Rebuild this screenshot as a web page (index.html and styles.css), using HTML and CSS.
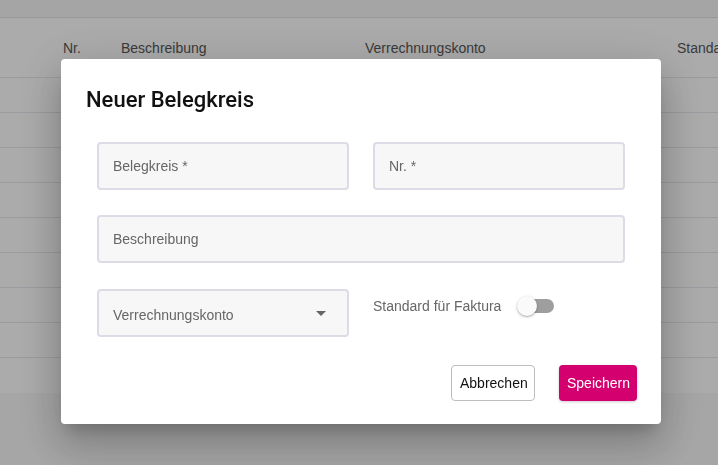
FILE: index.html
```html
<!DOCTYPE html>
<html lang="de">
<head>
<meta charset="utf-8">
<title>Neuer Belegkreis</title>
<link rel="stylesheet" href="styles.css">
</head>
<body>
<div class="page">
  <div class="topbar"></div>
  <div class="table">
    <div class="thead">
      <span>Nr.</span>
      <span>Beschreibung</span>
      <span>Verrechnungskonto</span>
      <span class="clip">Standard</span>
    </div>
    <div class="row"></div>
    <div class="row"></div>
    <div class="row"></div>
    <div class="row"></div>
    <div class="row"></div>
    <div class="row"></div>
    <div class="row"></div>
    <div class="row"></div>
    <div class="row last"></div>
  </div>
</div>

<div class="overlay">
  <div class="modal">
    <h2 class="title">Neuer Belegkreis</h2>
    <div class="form">
      <div class="field"><span class="ph">Belegkreis *</span></div>
      <div class="field"><span class="ph">Nr. *</span></div>
      <div class="field wide"><span class="ph">Beschreibung</span></div>
      <div class="field select">
        <span class="ph">Verrechnungskonto</span>
        <span class="caret"></span>
      </div>
      <div class="toggle-row">
        <span class="toggle-label">Standard für Faktura</span>
        <span class="toggle"><span class="track"></span><span class="knob"></span></span>
      </div>
    </div>
    <div class="actions">
      <button class="btn btn-outline">Abbrechen</button>
      <button class="btn btn-primary">Speichern</button>
    </div>
  </div>
</div>
</body>
</html>
```

FILE: styles.css
```css
* { box-sizing: border-box; }

html, body {
  margin: 0;
  padding: 0;
  height: 100%;
  overflow: hidden;
}

body {
  font-family: "Liberation Sans", Arial, sans-serif;
  background: #f8f8f8;
  color: #222;
}

.page {
  width: 718px;
  height: 465px;
}

.topbar {
  height: 18px;
  background: #f6f6f6;
  border-bottom: 1px solid #e2e2e6;
}

.table {
  background: #fff;
}

.thead {
  height: 60px;
  display: grid;
  grid-template-columns: 58px 244px 312px 41px;
  align-items: center;
  padding-left: 63px;
  padding-top: 1px;
  font-size: 14px;
  color: #575757;
  white-space: nowrap;
  border-bottom: 1px solid #e6e6ee;
}

.clip {
  overflow: hidden;
}

.row {
  height: 35px;
  border-bottom: 1px solid #e6e6ee;
}

.row.last {
  border-bottom: none;
}

.overlay {
  position: fixed;
  inset: 0;
  background: rgba(0, 0, 0, 0.33);
  display: flex;
  justify-content: flex-start;
  align-items: flex-start;
  padding: 59px 0 0 61px;
}

.modal {
  width: 600px;
  height: 365px;
  background: #fff;
  border-radius: 4px;
  padding: 27px 36px 0 36px;
  box-shadow: 0 11px 15px -7px rgba(0,0,0,.2), 0 24px 38px 3px rgba(0,0,0,.14), 0 9px 46px 8px rgba(0,0,0,.12);
}

.title {
  margin: 0 0 0 -11px;
  font-size: 22px;
  font-weight: 500;
  font-family: Roboto, "Liberation Sans", sans-serif;
  color: #111;
  line-height: 28px;
  height: 28px;
}

.form {
  margin-top: 28px;
  display: grid;
  grid-template-columns: 252px 252px;
  column-gap: 24px;
  row-gap: 25px;
}

.field {
  height: 48px;
  border: 2px solid #dcdce6;
  border-radius: 4px;
  background: #f7f7f8;
  display: flex;
  align-items: center;
  padding: 0 14px;
  font-size: 14px;
  color: #666;
}

.field.wide {
  grid-column: 1 / 3;
}

.field.select {
  margin-top: 1px;
  padding-top: 4px;
  justify-content: space-between;
}

.caret {
  width: 0;
  height: 0;
  border-left: 5px solid transparent;
  border-right: 5px solid transparent;
  border-top: 5px solid #666;
  margin-right: 7px;
  margin-top: -3px;
}

.toggle-row {
  display: flex;
  align-items: flex-start;
  padding-top: 9px;
  font-size: 14px;
  color: #666;
}

.toggle-label {
  line-height: 18px;
}

.toggle {
  position: relative;
  width: 40px;
  height: 20px;
  margin-left: 16px;
  margin-top: -1px;
}

.track {
  position: absolute;
  left: 3px;
  top: 3px;
  width: 34px;
  height: 14px;
  border-radius: 7px;
  background: #9e9e9e;
}

.knob {
  position: absolute;
  left: 0;
  top: 0;
  width: 20px;
  height: 20px;
  border-radius: 50%;
  background: #fafafa;
  box-shadow: 0 1px 3px rgba(0,0,0,.25), 0 1px 1px rgba(0,0,0,.12);
}

.actions {
  display: flex;
  justify-content: flex-end;
  gap: 24px;
  margin-top: 28px;
  margin-right: -12px;
}

.btn {
  height: 36px;
  font-family: "Liberation Sans", Arial, sans-serif;
  font-size: 14px;
  border-radius: 4px;
  padding: 0 8px;
  cursor: pointer;
}

.btn-outline {
  width: 84px;
  background: #fff;
  border: 1px solid #bdbdbd;
  color: #111;
}

.btn-primary {
  width: 78px;
  background: #d4006f;
  border: none;
  color: #fff;
  box-shadow: 0 1px 3px rgba(0,0,0,.2);
}
```
